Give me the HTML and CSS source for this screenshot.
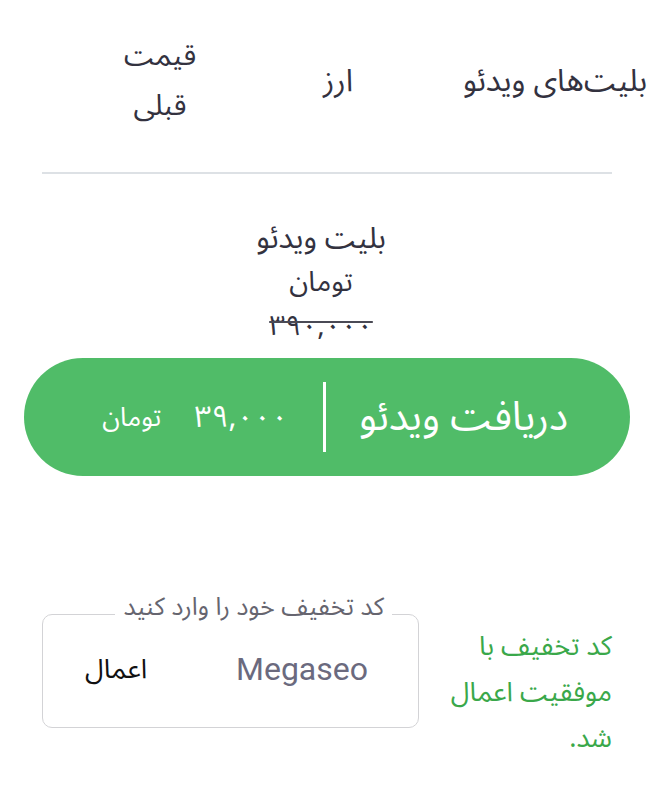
FILE: index.html
```html
<!DOCTYPE html>
<html lang="fa" dir="rtl">
<head>
<meta charset="utf-8">
<link rel="stylesheet" href="styles.css">
</head>
<body>
<div class="page">
  <div class="thead">
    <div class="th th-name">بلیت‌های ویدئو</div>
    <div class="th th-cur">ارز</div>
    <div class="th th-old"><span>قیمت قبلی</span></div>
  </div>
  <div class="divider"></div>
  <div class="item">
    <div class="item-name">بلیت ویدئو</div>
    <div class="item-cur">تومان</div>
    <div class="item-old">۳۹۰,۰۰۰</div>
  </div>
  <button class="buy">
    <span class="buy-label">دریافت ویدئو</span>
    <span class="buy-sep"></span>
    <span class="buy-price">۳۹,۰۰۰</span>
    <span class="buy-unit">تومان</span>
  </button>
  <div class="discount">
    <div class="msg">کد تخفیف با موفقیت اعمال شد.</div>
    <fieldset class="code">
      <legend>کد تخفیف خود را وارد کنید</legend>
      <div class="code-row">
        <span class="code-value">Megaseo</span>
        <span class="apply">اعمال</span>
      </div>
    </fieldset>
  </div>
</div>
</body>
</html>
```

FILE: styles.css
```css
* { box-sizing: border-box; }
html, body {
  margin: 0;
  padding: 0;
  background: #ffffff;
}
body {
  font-family: "Noto Sans Arabic", "Vazirmatn", "DejaVu Sans", sans-serif;
  color: #33323f;
  width: 648px;
  height: 800px;
  overflow: hidden;
}
.page {
  width: 648px;
}
.thead {
  display: grid;
  grid-template-columns: 200px 220px 136px;
  padding-top: 31px;
  align-items: center;
  font-size: 29px;
  line-height: 50px;
}
.th-name {
  text-align: right;
  white-space: nowrap;
  font-size: 31px;
  margin-right: 1px;
}
.th-cur {
  text-align: center;
  font-size: 31px;
}
.th-old {
  text-align: center;
}
.th-old span {
  display: inline-block;
  width: 80px;
}
.divider {
  height: 2px;
  background: #dde1e5;
  margin: 41px 36px 0 42px;
}
.item {
  display: flex;
  flex-direction: column;
  align-items: center;
  margin: 43px 42px 0 36px;
  line-height: 44px;
}
.item-name { font-size: 30px; }
.item-cur { font-size: 28px; }
.item-old {
  font-size: 28px;
  letter-spacing: 5px;
  text-decoration: line-through;
  text-decoration-color: #4a4a55;
  text-decoration-thickness: 2px;
}
.buy {
  display: flex;
  align-items: center;
  justify-content: flex-start;
  width: 606px;
  height: 118px;
  margin: 9px 18px 0 24px;
  border: none;
  border-radius: 59px;
  background: #50bc68;
  color: #ffffff;
  font-family: inherit;
  padding: 0 62px 0 0;
  direction: rtl;
}
.buy-label {
  font-size: 40px;
  margin-left: 33px;
}
.buy-sep {
  width: 3px;
  height: 70px;
  background: #ffffff;
  margin-left: 35px;
}
.buy-price {
  font-size: 30px;
  letter-spacing: 1px;
  margin-left: 33px;
}
.buy-unit {
  font-size: 26px;
}
.discount {
  display: flex;
  align-items: flex-start;
  margin-top: 116px;
  padding-right: 36px;
}
.msg {
  width: 170px;
  color: #3aa84a;
  font-size: 27px;
  line-height: 46px;
  margin-top: 32px;
}
.code {
  margin: 0 23px 0 0;
  width: 377px;
  min-width: 0;
  height: 136px;
  border: 1.5px solid #d3d3d6;
  border-radius: 10px;
  padding: 0;
}
.code legend {
  font-size: 25px;
  line-height: 30px;
  white-space: nowrap;
  color: #66656f;
  padding: 0 8px 14px;
  margin-right: 26px;
}
.code-row {
  display: flex;
  align-items: center;
  justify-content: space-between;
  height: 66px;
  padding: 0 50px 0 42px;
}
.code-value {
  font-family: "Roboto", "Liberation Sans", sans-serif;
  font-size: 32px;
  color: #6b6a7e;
}
.apply {
  font-size: 27px;
  color: #111111;
}
```
